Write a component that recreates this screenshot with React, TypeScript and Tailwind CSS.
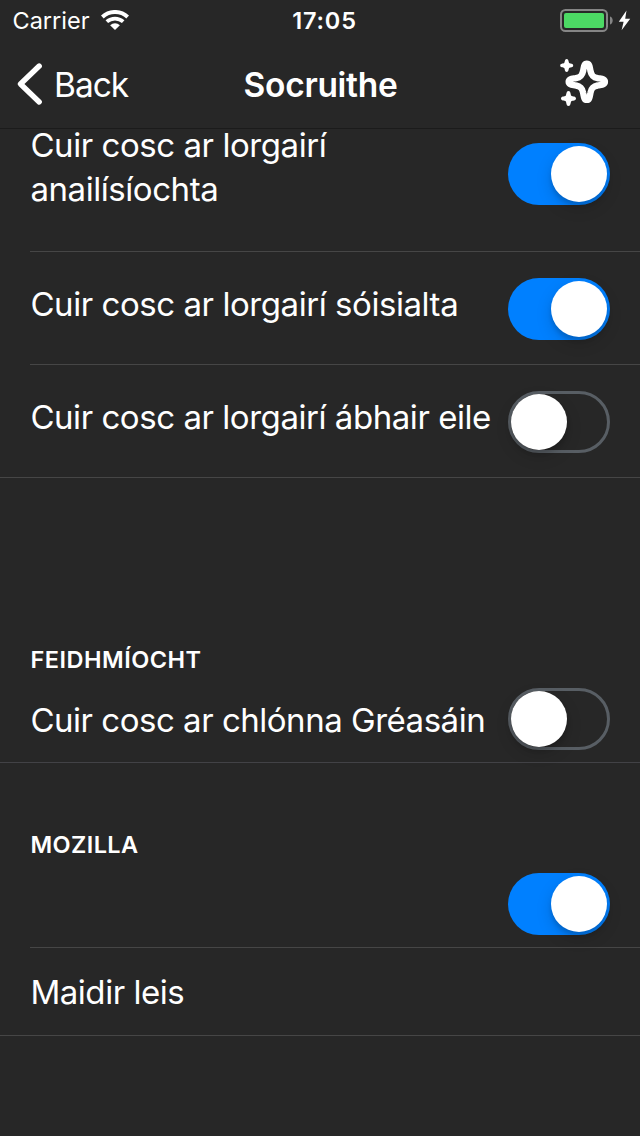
import { useState } from 'react';

function Toggle({ initial, label }: { initial: boolean; label: string }) {
  const [on, setOn] = useState(initial);
  return (
    <button
      role="switch"
      aria-checked={on}
      aria-label={label}
      onClick={() => setOn(!on)}
      className={
        on
          ? 'flex h-[62px] w-[102px] shrink-0 items-center justify-end rounded-full bg-[#0080ff] p-[3px]'
          : 'flex h-[62px] w-[102px] shrink-0 items-center rounded-full border-[3px] border-[#585e64]'
      }
    >
      <span className="size-14 rounded-full bg-white shadow-[0_6px_16px_rgba(0,0,0,0.15),0_4px_4px_rgba(0,0,0,0.13)]" />
    </button>
  );
}

function StatusBar() {
  return (
    <div className="flex h-10 items-center justify-between pl-3 pr-[9px] pt-px">
      <div className="flex w-[243px] items-center">
        <span className="w-[90px] whitespace-nowrap pl-[0.5px] text-[23.5px] leading-10">Carrier</span>
        <svg width="28" height="20" viewBox="0 0 28 20" className="-ml-px -mt-0.5" fill="none" stroke="white">
          <path d="M1.3 7C8.4 0.3 19.6 0.3 26.7 7" strokeWidth="4" />
          <path d="M5.8 11.6C10.5 7.5 17.5 7.5 22.2 11.6" strokeWidth="3.8" />
          <path d="M14 20L9.1 15.3C12 12.6 16 12.6 18.9 15.3Z" fill="white" stroke="none" />
        </svg>
      </div>
      <span className="whitespace-nowrap text-[23.5px] font-semibold leading-10 tracking-[0.8px]">17:05</span>
      <div className="flex w-[237px] items-center justify-end">
        <svg width="71" height="24" viewBox="0 0 71 24" fill="none" className="-mt-px">
          <rect x="1" y="2" width="46" height="21" rx="4.5" stroke="#858585" strokeWidth="2" />
          <rect x="4" y="5" width="40" height="15" rx="2" fill="#4cd964" />
          <path d="M50 8.5C53.6 9.5 53.6 15.5 50 16.5Z" fill="#858585" />
          <path d="M66.5 2.5L58.8 13.8H63.6L61.6 22.2L70.2 10.7H65.2Z" fill="white" />
        </svg>
      </div>
    </div>
  );
}

function NavBar() {
  return (
    <div className="grid h-[88px] grid-cols-[1fr_auto_1fr] items-center px-4">
      <button className="flex items-center">
        <svg width="28" height="44" viewBox="0 0 28 44" fill="none" stroke="white" strokeWidth="5.4" strokeLinecap="round" strokeLinejoin="round">
          <path d="M23.2 4L4.5 22L23.2 40" />
        </svg>
        <span className="ml-[10px] pt-px text-[33.5px] leading-[44px] tracking-[-1px]">Back</span>
      </button>
      <h1 className="pt-px pl-px text-[33.5px] font-semibold leading-[44px] tracking-[-0.3px]">Socruithe</h1>
      <svg width="52" height="52" viewBox="0 0 52 52" fill="none" className="-mt-1 mr-[14px] justify-self-end">
        <path
          d="M28.8 7.7C31.7 7.7 31.6 11 32.5 15C33.4 19.5 35 21.2 39.6 22.1C43.6 22.9 46.9 22.9 46.9 25.8C46.9 28.7 43.6 28.6 39.6 29.5C35 30.4 33.4 32.1 32.5 36.6C31.6 40.6 31.7 43.9 28.8 43.9C25.9 43.9 26 40.6 25.1 36.6C24.2 32.1 22.6 30.4 18 29.5C14 28.6 10.7 28.7 10.7 25.8C10.7 22.9 14 22.9 18 22.1C22.6 21.2 24.2 19.5 25.1 15C26 11 25.9 7.7 28.8 7.7Z"
          stroke="white"
          strokeWidth="6.4"
        />
        <path d="M8.7 3C10.8 3 10.4 6 11.2 7C12.2 7.8 15.2 7.4 15.2 9.5C15.2 11.6 12.2 11.2 11.2 12C10.4 13 10.8 16 8.7 16C6.6 16 7 13 6.2 12C5.2 11.2 2.2 11.6 2.2 9.5C2.2 7.4 5.2 7.8 6.2 7C7 6 6.6 3 8.7 3Z" fill="white" />
        <path d="M10.5 35C12.9 35 12.4 38.5 13.3 39.7C14.5 40.6 18 40.1 18 42.5C18 44.9 14.5 44.4 13.3 45.3C12.4 46.5 12.9 50 10.5 50C8.1 50 8.6 46.5 7.7 45.3C6.5 44.4 3 44.9 3 42.5C3 40.1 6.5 40.6 7.7 39.7C8.6 38.5 8.1 35 10.5 35Z" fill="white" />
      </svg>
    </div>
  );
}

const rowText = 'text-[33px] leading-[44px] whitespace-nowrap pl-[0.4px]';

export default function App() {
  return (
    <div className="flex h-[1136px] w-[640px] flex-col overflow-hidden bg-[#272727] font-[Inter,sans-serif] text-white">
      <header className="relative z-10 h-[129px] shrink-0 border-b border-[#1b1b1b] bg-[#272727]">
        <StatusBar />
        <NavBar />
      </header>
      <main className="flex flex-col">
        <section className="border-b border-[#464646]">
          <div className="ml-[30px] flex h-[123px] items-start justify-between border-b border-[#464646] pr-[30px]">
            <p className={rowText + ' -mt-[6px] tracking-[-0.44px]'}>
              Cuir cosc ar lorgairí
              <br />
              anailísíochta
            </p>
            <div className="pt-[14px]">
              <Toggle initial={true} label="anailísíochta" />
            </div>
          </div>
          <div className="ml-[30px] flex h-[113px] items-start justify-between border-b border-[#464646] pr-[30px]">
            <p className={rowText + ' pt-[30px] tracking-[-0.44px]'}>Cuir cosc ar lorgairí sóisialta</p>
            <div className="pt-[26px]">
              <Toggle initial={true} label="sóisialta" />
            </div>
          </div>
          <div className="ml-[30px] flex h-[112px] items-start justify-between pr-[30px]">
            <p className={rowText + ' pt-[30px] tracking-[-0.45px]'}>Cuir cosc ar lorgairí ábhair eile</p>
            <div className="pt-[26px]">
              <Toggle initial={false} label="ábhair eile" />
            </div>
          </div>
        </section>
        <section className="h-[285px] border-b border-[#424246] pl-[30px] pr-[30px] pt-[166px]">
          <h2 className="pl-[0.5px] text-[23.5px] font-semibold leading-8 tracking-[0.5px]">FEIDHMÍOCHT</h2>
          <div className="flex items-start justify-between pt-3">
            <p className={rowText + ' pt-2.5 tracking-[-0.48px]'}>Cuir cosc ar chlónna Gréasáin</p>
            <Toggle initial={false} label="Gréasáin" />
          </div>
        </section>
        <section className="border-b border-[#464646] pl-[30px] pt-[66px]">
          <h2 className="pl-[0.5px] text-[23.5px] font-semibold leading-8 tracking-[0.4px]">MOZILLA</h2>
          <div className="flex h-[87px] items-end justify-end border-b border-[#464646] pb-3 pr-[30px]">
            <Toggle initial={true} label="Mozilla" />
          </div>
          <div className="flex h-[87px] items-start pt-[22px]">
            <p className={rowText + ' tracking-[-0.45px]'}>Maidir leis</p>
          </div>
        </section>
      </main>
    </div>
  );
}
